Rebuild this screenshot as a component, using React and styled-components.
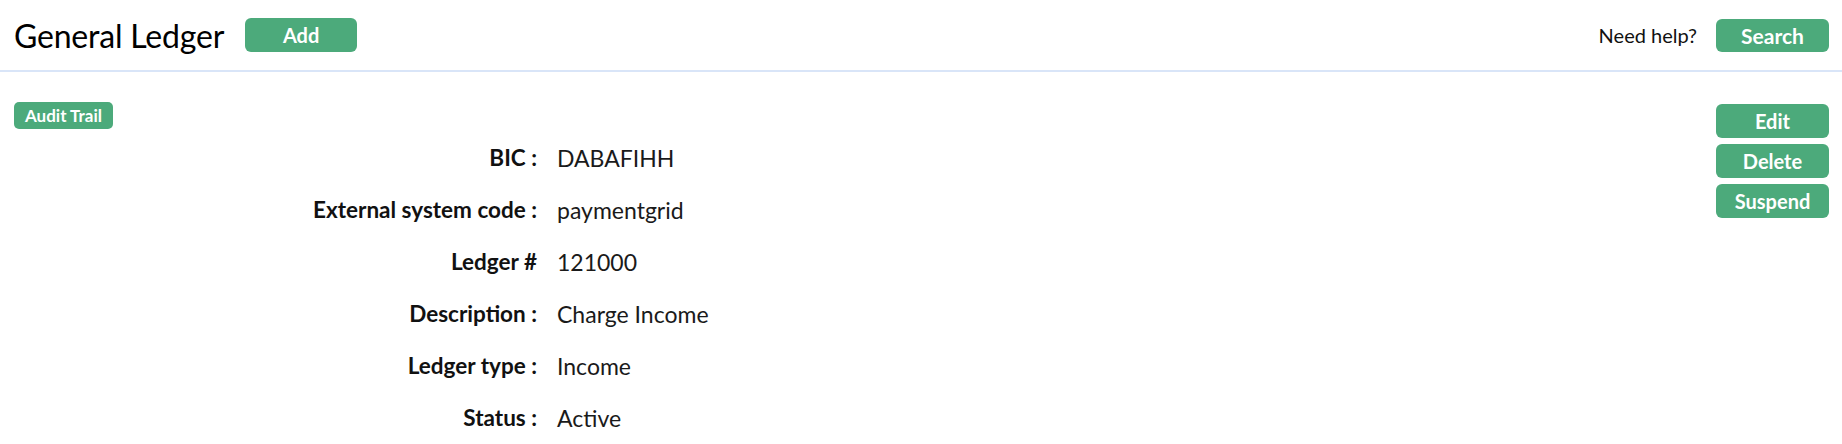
import React from "react";
import styled, { createGlobalStyle } from "styled-components";

const GlobalStyle = createGlobalStyle`
  html, body { margin: 0; padding: 0; background: #fff; }
  body { font-family: Lato, "Open Sans", sans-serif; color: #111; }
  * { box-sizing: border-box; }
`;

const Header = styled.header`
  display: flex;
  align-items: center;
  justify-content: space-between;
  height: 72px;
  padding: 0 13px 0 14px;
  border-bottom: 2px solid #d9e5f8;
`;

const HeaderGroup = styled.div`
  display: flex;
  align-items: center;
  gap: ${(p) => p.$gap}px;
`;

const Title = styled.h1`
  margin: 0;
  font-size: 32px;
  font-weight: 400;
  color: #000;
  letter-spacing: -0.2px;
`;

const HelpText = styled.span`
  font-size: 20px;
  color: #111;
`;

const Button = styled.button`
  display: inline-flex;
  align-items: center;
  justify-content: center;
  width: ${(p) => p.$w}px;
  height: ${(p) => p.$h}px;
  padding: 0;
  border: none;
  border-radius: ${(p) => p.$r || 6}px;
  background: #4caa7b;
  color: #fff;
  font-family: Lato, "Open Sans", sans-serif;
  font-weight: 700;
  font-size: ${(p) => p.$fs}px;
  cursor: pointer;
`;

const Main = styled.main`
  display: flex;
  justify-content: space-between;
  padding: 30px 13px 0 14px;
`;

const LeftColumn = styled.div`
  display: flex;
  flex-direction: column;
  align-items: flex-start;
`;

const ActionColumn = styled.div`
  display: flex;
  flex-direction: column;
  gap: 6px;
  padding-top: 2px;
`;

const Details = styled.dl`
  display: grid;
  grid-template-columns: 523px auto;
  column-gap: 20px;
  margin: 3px 0 0;
`;

const Label = styled.dt`
  text-align: right;
  font-weight: 700;
  font-size: 22.5px;
  line-height: 52px;
  color: #111;
`;

const Value = styled.dd`
  margin: 0;
  font-size: 23px;
  line-height: 52px;
  color: #1a1a1a;
`;

const rows = [
  ["BIC", "DABAFIHH"],
  ["External system code", "paymentgrid"],
  ["Ledger #", "121000"],
  ["Description", "Charge Income"],
  ["Ledger type", "Income"],
  ["Status", "Active"],
];

export default function App() {
  return (
    <>
      <GlobalStyle />
      <Header>
        <HeaderGroup $gap={21}>
          <Title>General Ledger</Title>
          <Button $w={112} $h={34} $fs={20}>Add</Button>
        </HeaderGroup>
        <HeaderGroup $gap={19}>
          <HelpText>Need help?</HelpText>
          <Button $w={113} $h={33} $fs={21}>Search</Button>
        </HeaderGroup>
      </Header>
      <Main>
        <LeftColumn>
          <Button $w={99} $h={27} $fs={17} $r={5}>Audit Trail</Button>
          <Details>
            {rows.map(([k, v]) => (
              <React.Fragment key={k}>
                <Label>{k === "Ledger #" ? k : `${k} :`}</Label>
                <Value>{v}</Value>
              </React.Fragment>
            ))}
          </Details>
        </LeftColumn>
        <ActionColumn>
          <Button $w={113} $h={34} $fs={20}>Edit</Button>
          <Button $w={113} $h={34} $fs={20}>Delete</Button>
          <Button $w={113} $h={34} $fs={20}>Suspend</Button>
        </ActionColumn>
      </Main>
    </>
  );
}
